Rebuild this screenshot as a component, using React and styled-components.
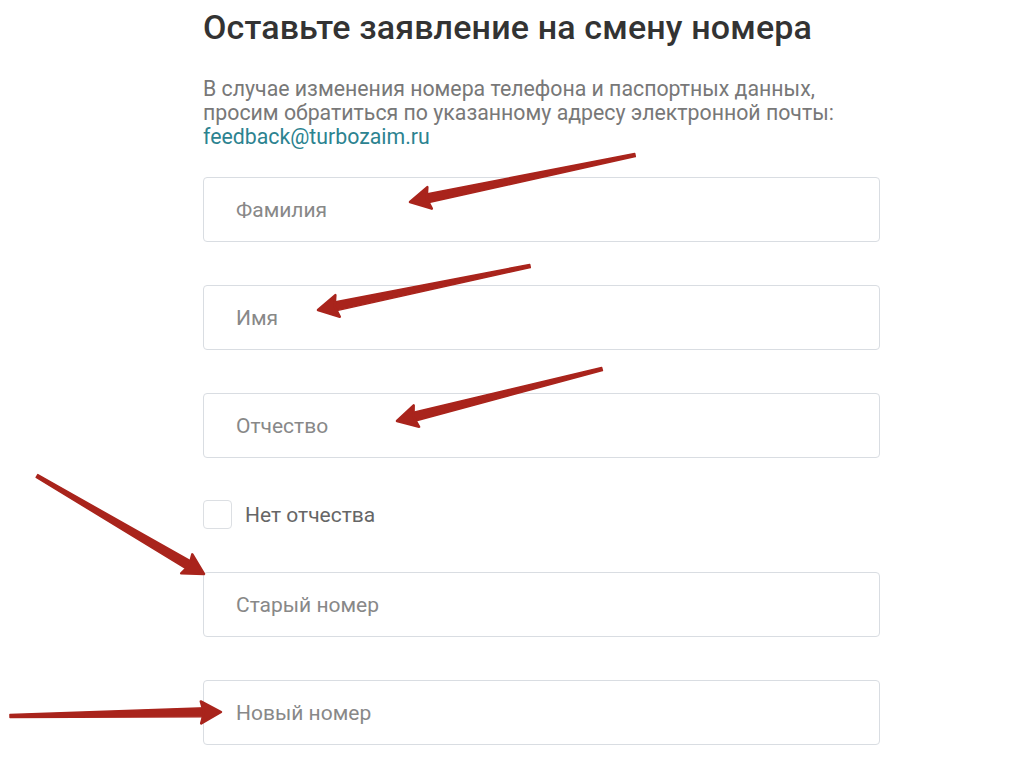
import React from 'react'
import styled, { createGlobalStyle } from 'styled-components'

const Global = createGlobalStyle`
  html, body {
    margin: 0;
    padding: 0;
    background: #ffffff;
  }
  body {
    font-family: Roboto, 'Liberation Sans', sans-serif;
  }
`

const Page = styled.div`
  position: relative;
  width: 1023px;
  height: 770px;
  overflow: hidden;
  background: #fff;
`

const Column = styled.div`
  display: flex;
  flex-direction: column;
  width: 677px;
  margin-left: 203px;
  padding-top: 7px;
`

const Title = styled.h1`
  margin: 0;
  font-size: 34px;
  font-weight: 500;
  line-height: 40px;
  color: #333333;
  letter-spacing: 0.15px;
`

const Lead = styled.p`
  margin: 30px 0 0;
  font-size: 21.3px;
  line-height: 24px;
  color: #787878;
`

const Mail = styled.a`
  color: #2c8390;
  text-decoration: none;
`

const Fields = styled.div`
  display: flex;
  flex-direction: column;
  gap: 43px;
  margin-top: 28px;
`

const Input = styled.input`
  box-sizing: border-box;
  width: 100%;
  height: 65px;
  padding: 0 32px;
  border: 1px solid #d9dde2;
  border-radius: 4px;
  font-family: Roboto, 'Liberation Sans', sans-serif;
  font-size: 21px;
  color: #333;
  outline: 0;
  background: #fff;

  &::placeholder {
    color: #888888;
  }
`

const CheckRow = styled.label`
  display: flex;
  align-items: center;
  gap: 13px;
  height: 29px;
  margin: -1px 0 0;
  font-size: 21px;
  color: #666;
`

const Box = styled.span`
  display: block;
  width: 29px;
  height: 29px;
  box-sizing: border-box;
  border: 1px solid #dcdfe3;
  border-radius: 4px;
`

const Arrows = styled.svg`
  position: absolute;
  left: 0;
  top: 0;
  pointer-events: none;
`

const arrows = [
  [635, 155, 410, 202],
  [530, 266, 318, 310],
  [602, 369, 397, 421],
  [37, 476, 204, 574],
  [10, 716, 221, 712],
]

function Arrow({ x1, y1, x2, y2 }) {
  const dx = x2 - x1
  const dy = y2 - y1
  const len = Math.hypot(dx, dy)
  const ux = dx / len
  const uy = dy / len
  const px = -uy
  const py = ux
  const head = 20
  const half = 11
  const bx = x2 - ux * head
  const by = y2 - uy * head
  const tail = 1.6
  const neck = 4.5
  const nx = bx + ux * 5
  const ny = by + uy * 5
  const shaft = [
    [x1 + px * tail, y1 + py * tail],
    [nx + px * neck, ny + py * neck],
    [nx - px * neck, ny - py * neck],
    [x1 - px * tail, y1 - py * tail],
  ]
    .map((p) => p.join(','))
    .join(' ')
  const tip = `${x2},${y2} ${bx + px * half},${by + py * half} ${bx + ux * 3},${by + uy * 3} ${bx - px * half},${by - py * half}`
  return (
    <g fill="#a9241c" stroke="#a9241c" strokeLinejoin="round">
      <polygon points={shaft} strokeWidth="1.5" />
      <polygon points={tip} strokeWidth="2.5" />
    </g>
  )
}

export default function App() {
  return (
    <Page>
      <Global />
      <Column>
        <Title>Оставьте заявление на смену номера</Title>
        <Lead>
          В случае изменения номера телефона и паспортных данных,
          <br />
          просим обратиться по указанному адресу электронной почты:
          <br />
          <Mail href="#">feedback@turbozaim.ru</Mail>
        </Lead>
        <Fields>
          <Input placeholder="Фамилия" />
          <Input placeholder="Имя" />
          <Input placeholder="Отчество" />
          <CheckRow>
            <Box />
            Нет отчества
          </CheckRow>
          <Input placeholder="Старый номер" />
          <Input placeholder="Новый номер" />
        </Fields>
      </Column>
      <Arrows width="1023" height="770" viewBox="0 0 1023 770">
        {arrows.map(([x1, y1, x2, y2], i) => (
          <Arrow key={i} x1={x1} y1={y1} x2={x2} y2={y2} />
        ))}
      </Arrows>
    </Page>
  )
}
